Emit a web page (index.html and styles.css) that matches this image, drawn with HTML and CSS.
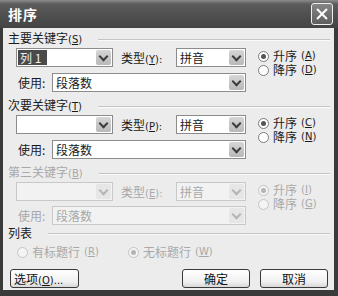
FILE: index.html
```html
<!DOCTYPE html>
<html lang="zh-CN">
<head>
    <meta charset="UTF-8">
    <title>排序</title>
    <link rel="stylesheet" href="styles.css">
</head>
<body>
    <div class="window">
        <div class="titlebar">
            <span class="title">排序</span>
            <span class="close"></span>
        </div>
        <div class="content">
            <div class="group">
                <div class="legend"><span>主要关键字<i>(<u>S</u>)</i></span></div>
                <div class="group-body">
                    <div class="fields">
                        <div class="row">
                            <div class="sel key"><span class="val picked">列 1</span><span class="arrow"></span></div>
                            <span class="type-label">类型<i>(<u>Y</u>):</i></span>
                            <div class="sel type"><span class="val">拼音</span><span class="arrow"></span></div>
                        </div>
                        <div class="row">
                            <span class="use-label">使用:</span>
                            <div class="sel use"><span class="val">段落数</span><span class="arrow"></span></div>
                        </div>
                    </div>
                    <div class="radios">
                        <label class="radio"><span class="dot on"></span>升序<i>(<u>A</u>)</i></label>
                        <label class="radio"><span class="dot"></span>降序<i>(<u>D</u>)</i></label>
                    </div>
                </div>
            </div>

            <div class="group">
                <div class="legend"><span>次要关键字<i>(<u>T</u>)</i></span></div>
                <div class="group-body">
                    <div class="fields">
                        <div class="row">
                            <div class="sel key"><span class="val"></span><span class="arrow"></span></div>
                            <span class="type-label">类型<i>(<u>P</u>):</i></span>
                            <div class="sel type"><span class="val">拼音</span><span class="arrow"></span></div>
                        </div>
                        <div class="row">
                            <span class="use-label">使用:</span>
                            <div class="sel use"><span class="val">段落数</span><span class="arrow"></span></div>
                        </div>
                    </div>
                    <div class="radios">
                        <label class="radio"><span class="dot on"></span>升序<i>(<u>C</u>)</i></label>
                        <label class="radio"><span class="dot"></span>降序<i>(<u>N</u>)</i></label>
                    </div>
                </div>
            </div>

            <div class="group off">
                <div class="legend"><span>第三关键字<i>(<u>B</u>)</i></span></div>
                <div class="group-body">
                    <div class="fields">
                        <div class="row">
                            <div class="sel key"><span class="val"></span><span class="arrow"></span></div>
                            <span class="type-label">类型<i>(<u>E</u>):</i></span>
                            <div class="sel type"><span class="val">拼音</span><span class="arrow"></span></div>
                        </div>
                        <div class="row">
                            <span class="use-label">使用:</span>
                            <div class="sel use"><span class="val">段落数</span><span class="arrow"></span></div>
                        </div>
                    </div>
                    <div class="radios">
                        <label class="radio"><span class="dot on"></span>升序<i>(<u>I</u>)</i></label>
                        <label class="radio"><span class="dot"></span>降序<i>(<u>G</u>)</i></label>
                    </div>
                </div>
            </div>

            <div class="list">
                <div class="legend list-legend"><span>列表</span></div>
                <div class="list-row off">
                    <label class="radio first"><span class="dot"></span>有标题行<i>(<u>R</u>)</i></label>
                    <label class="radio"><span class="dot on"></span>无标题行<i>(<u>W</u>)</i></label>
                </div>
            </div>

            <div class="buttons">
                <button class="btn options">选项<i>(<u>O</u>)...</i></button>
                <span class="spacer"></span>
                <button class="btn">确定</button>
                <button class="btn">取消</button>
            </div>
        </div>
    </div>
</body>
</html>
```

FILE: styles.css
```css
body {
    margin: 0;
    font-family: "Noto Sans CJK SC", "DejaVu Sans", sans-serif;
    font-size: 12px;
    color: #1a1a1a;
}
i {
    font-style: normal;
    font-family: "DejaVu Sans", sans-serif;
    font-size: 10px;
}
.window {
    width: 338px;
    height: 296px;
    display: flex;
    flex-direction: column;
    background: #3a3a3a;
}
.titlebar {
    height: 28px;
    flex: none;
    display: flex;
    align-items: center;
    justify-content: space-between;
    padding: 0 5px 0 8px;
    background: linear-gradient(#8c8c8c, #5c5c5c 4px, #505050 50%, #444 100%);
    color: #fff;
}
.title {
    font-weight: bold;
    font-size: 14px;
    letter-spacing: 1px;
}
.close {
    width: 20px;
    height: 20px;
    border: 1px solid #eee;
    border-radius: 3px;
    background: linear-gradient(#858585, #5e5e5e);
    position: relative;
}
.close::before,
.close::after {
    content: "";
    position: absolute;
    left: 3px;
    top: 9px;
    width: 14px;
    height: 2px;
    background: #fff;
    transform: rotate(45deg);
}
.close::after {
    transform: rotate(-45deg);
}
.content {
    flex: 1;
    margin: 0 4px 6px 3px;
    background: #ececec;
    padding: 4px 4px 0 5px;
    display: flex;
    flex-direction: column;
}
.legend {
    display: flex;
    align-items: center;
    height: 14px;
    line-height: 14px;
}
.legend::after {
    content: "";
    flex: 1;
    margin: 2px 0 0 16px;
    border-top: 1px solid #c4c4c4;
    border-bottom: 1px solid #fafafa;
}
.group {
    margin-bottom: 7px;
}
.group.off {
    margin-bottom: 1px;
}
.group-body {
    display: flex;
    margin-top: 2px;
    padding-left: 8px;
}
.fields {
    display: flex;
    flex-direction: column;
    gap: 6px;
}
.off .fields {
    gap: 5px;
}
.row {
    display: flex;
    align-items: center;
    height: 19px;
}
.sel {
    height: 19px;
    box-sizing: border-box;
    border: 1px solid #8c8c8c;
    background: #fff;
    display: flex;
    align-items: center;
    padding: 1px;
}
.sel.key {
    width: 97px;
}
.sel.type {
    width: 70px;
}
.sel.use {
    width: 194px;
}
.val {
    padding-left: 2px;
    line-height: 15px;
}
.val.picked {
    background: #4a4a4a;
    color: #eee;
    padding: 0 6px 0 2px;
}
.arrow {
    margin-left: auto;
    width: 15px;
    height: 15px;
    border-radius: 2px;
    background: linear-gradient(#d6d6d6, #b8b8b8);
    position: relative;
}
.arrow::before {
    content: "";
    position: absolute;
    left: 4px;
    top: 3px;
    width: 5px;
    height: 5px;
    border-right: 2px solid #3c3c3c;
    border-bottom: 2px solid #3c3c3c;
    transform: rotate(45deg);
}
.type-label {
    width: 55px;
    margin-left: 8px;
}
.use-label {
    width: 34px;
    margin-left: 2px;
}
.radios {
    margin-left: 12px;
    padding-top: 1px;
    display: flex;
    flex-direction: column;
}
.radio {
    display: flex;
    align-items: center;
    gap: 4px;
    height: 14px;
    line-height: 14px;
}
.dot {
    width: 11px;
    height: 11px;
    box-sizing: border-box;
    border: 1px solid #7c7c7c;
    border-radius: 50%;
    background: #fff;
    position: relative;
}
.dot.on::after {
    content: "";
    position: absolute;
    left: 2px;
    top: 2px;
    width: 5px;
    height: 5px;
    border-radius: 50%;
    background: #555;
}
.off {
    color: #a8a8a8;
}
.off .sel {
    border-color: #c8c8c8;
    background: #f2f2f2;
}
.off .arrow {
    background: #e6e6e6;
}
.off .arrow::before {
    border-color: #b4b4b4;
}
.off .dot {
    border-color: #c4c4c4;
    background: #f4f4f4;
}
.off .dot.on::after {
    background: #b4b4b4;
}
.list-row {
    display: flex;
    align-items: center;
    height: 16px;
    margin-top: 4px;
    padding-left: 9px;
}
.radio.first {
    width: 111px;
}
.buttons {
    margin-top: auto;
    margin-bottom: 2px;
    display: flex;
    gap: 10px;
    padding: 0 2px;
}
.spacer {
    flex: 1;
}
.btn {
    width: 68px;
    height: 19px;
    padding: 0;
    border: 1px solid #3a3a3a;
    border-radius: 3px;
    background: linear-gradient(#fff, #f0f0f0 70%, #d8d8d8);
    font-family: "Noto Sans CJK SC", sans-serif;
    font-size: 12px;
    color: #111;
    line-height: 17px;
}
.btn.options {
    width: 69px;
    text-align: left;
    padding-left: 3px;
}
```
